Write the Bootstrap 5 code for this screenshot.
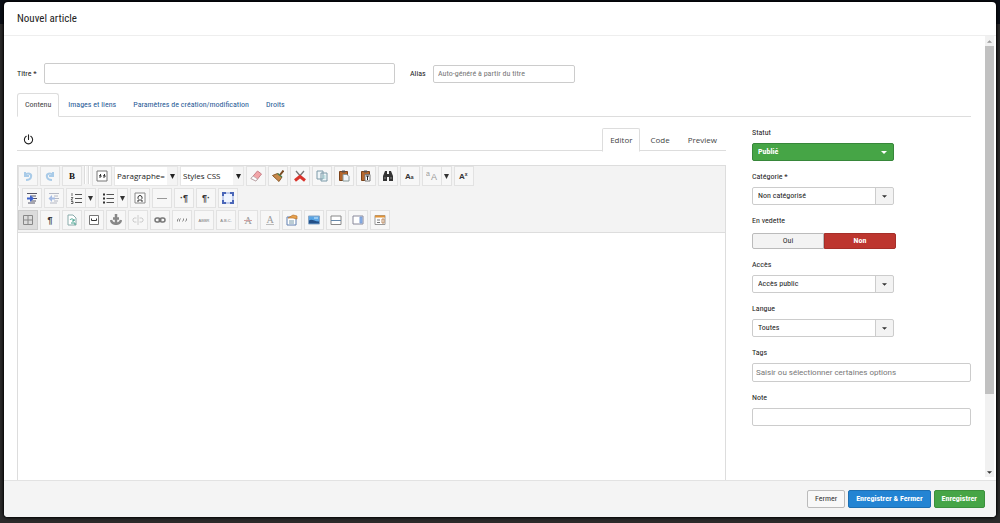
<!DOCTYPE html>
<html lang="fr">
<head>
<meta charset="utf-8">
<meta name="viewport" content="width=device-width, initial-scale=1">
<title>Nouvel article</title>
<link href="https://cdn.jsdelivr.net/npm/bootstrap@5.3.0/dist/css/bootstrap.min.css" rel="stylesheet">
<style>
  body { font: 8px/14px "Roboto Condensed", "Liberation Sans", sans-serif; color: #222; background: linear-gradient(#0a0e16 24px, #2b2a2a 24px); }
  .shell { height: 100vh; padding: 2px 4px 6px; }
  .dialog { background: #fff; border-radius: 4px; box-shadow: 0 0 3px 1px #000; }
  .dialog-head { height: 34px; border-bottom: 1px solid #eee; padding: 0 13px; }
  .dialog-head h1 { font-size: 11px; line-height: 16px; font-weight: 400; }
  .dialog-foot { background: #f4f4f4; border-top: 1px solid #e2e2e2; height: 37px; padding: 0 11px 0 0; gap: 3px; }
  .pane { padding: 27px 14px 0 13px; }
  .field { font: inherit; color: #222; border: 1px solid #ccc; border-radius: 2px; height: 18px; padding: 0 4px; background-color: #fff; }
  .field::placeholder { color: #777; opacity: 1; }
  .field-title { height: 21px; width: 351px; }
  .field-alias { width: 142px; }
  .title-label { width: 27px; }
  .alias-label { width: 23px; margin-left: 15px; }
  .tabs-main, .tabs-edit { border-bottom: 1px solid #ddd; }
  .tabs-main .nav-link { padding: 4px 7px; margin-right: 1px; font-size: 8px; line-height: 14px; border-radius: 3px 3px 0 0; color: #1f5a96; }
  .tabs-main .nav-link.active, .tabs-edit .nav-link.active { color: #444; border-color: #ddd #ddd #fff; }
  .tabs-main { margin-top: 9px; }
  .tabs-edit .nav-link { font: 8px/14px "Open Sans", sans-serif; padding: 4px 7px; margin-right: 2px; color: #444; border-radius: 2px 2px 0 0; }
  .tabs-edit .nav-item:last-child .nav-link { margin-right: 1px; }
  .columns { gap: 26px; padding-top: 8px; }
  .editor-head { margin-top: 3px; border-bottom: 1px solid #ddd; padding-left: 6px; }
  .tabs-edit { border: 0; margin-bottom: -1px; }
  .editor { margin-top: 14px; border: 1px solid #ddd; border-bottom: 0; }
  .tools { background: #f3f3f3; border-bottom: 1px solid #ddd; }
  .tools > div { gap: 2px; height: 22px; }
  .tool { width: 20px; height: 20px; padding: 0; border: 1px solid #e2e2e2; background: #f7f7f7; color: #333; font-family: "Liberation Sans", sans-serif; font-size: 9px; display: flex; align-items: center; justify-content: center; flex: none; }
  .tool svg { width: 12px; height: 12px; fill: none; stroke: currentColor; }
  .tool.pressed { background: #dcdcdc; border-color: #ccc; }
  .tool.faint { color: #b4b4b4; }
  .tool.drop { width: 11px; margin-left: -3px; }
  .tool.drop svg { width: 7px; height: 7px; }
  .rule { width: 2px; height: 18px; border-left: 1px solid #dcdcdc; border-right: 1px solid #fff; }
  .pick { font: 8px/18px "Open Sans", sans-serif; color: #222; width: 64px; height: 20px; border: 1px solid #e6e6e6; padding: 0 0 0 2px; appearance: none; border-radius: 0;
    background: url("data:image/svg+xml,%3Csvg xmlns='http://www.w3.org/2000/svg' viewBox='0 0 5 5'%3E%3Cpath d='M0 0h5L2.500 5z' fill='%23222'/%3E%3C/svg%3E") right 2px center/5px 5px no-repeat, linear-gradient(to left, #f4f4f4 10px, #fff 10px); }
  .sheet { border: 0; resize: none; outline: 0; }
  .side { width: 219px; flex: none; padding-top: 1px; }
  .side label, .side .legend { display: block; margin-bottom: 3px; line-height: 14px; }
  .side .group { margin-bottom: 9px; }
  .chooser { width: 142px; padding-left: 5px; appearance: none; display: block;
    background: url("data:image/svg+xml,%3Csvg xmlns='http://www.w3.org/2000/svg' viewBox='0 0 6 3'%3E%3Cpath d='M0 0h6L3 3z' fill='%23333'/%3E%3C/svg%3E") right 6px center/5px 3px no-repeat, linear-gradient(to left, #f3f3f3 17px, #ccc 17px, #ccc 18px, #fff 18px); }
  .chooser.live { color: #fff; font-weight: 700; border-color: #37873a;
    background: url("data:image/svg+xml,%3Csvg xmlns='http://www.w3.org/2000/svg' viewBox='0 0 6 3'%3E%3Cpath d='M0 0h6L3 3z' fill='%23fff'/%3E%3C/svg%3E") right 6px center/6px 3px no-repeat, #46a546; }
  .wide { width: 100%; display: block; }
  .tags { font-family: Roboto, sans-serif; height: 19px; padding: 0 3px; }
  .switch { height: 18px; padding-top: 2px; width: 144px; }
  .side .switch .btn { font-size: 8px; line-height: 14px; padding: 0; border: 1px solid #bbb; background: #f3f3f3; color: #333; border-radius: 2px; display: block; margin: 0; flex: 1; }
  .side .switch .btn-check:checked + .btn { background: #bd362f; border-color: #a52f29; color: #fff; font-weight: 700; }
  .act { font-size: 8px; line-height: 16px; padding: 0 7px; border-radius: 2px; border: 1px solid #bbb; color: #333; background: #f8f8f8; }
  .act-blue { background: #2384d3; border-color: #1d6fb2; color: #fff; font-weight: 700; }
  .act-green { background: #46a546; border-color: #3c903c; color: #fff; font-weight: 700; }
  .track { width: 9px; background: #f1f1f1; margin-right: 2px; margin-bottom: 3px; padding-top: 1px; }
  .track svg { width: 5px; height: 3px; margin: 3px auto; display: block; }
  .thumb { background: #c1c1c1; height: 79%; }
</style>
</head>
<body>
<svg class="d-none" xmlns="http://www.w3.org/2000/svg">
  <symbol id="i-down" viewBox="0 0 7 7"><path d="M1 1h5L3.500 6z" fill="currentColor" stroke="none"/></symbol>
  <symbol id="i-undo" viewBox="0 0 12 12"><path d="M3 2v4h4M3 5c3-3 7-1 6 2-.5 2-2 3-5 3" stroke="#a9cbe8" stroke-width="2"/></symbol>
  <symbol id="i-quote" viewBox="0 0 12 12"><path d="M1 1h10v10H1z" fill="#fff" stroke="#777"/><path d="M3 7h2V5.500H3.500L5 4M7 7h2V5.500H7.500L9 4" stroke="#333"/></symbol>
  <symbol id="i-eraser" viewBox="0 0 12 12"><path d="M1 8.500 7.500 1l4 3L6 11z" fill="#f2a5a8" stroke="#c98088"/><path d="m1 8.500 2-2.500 4.500 3L6 11z" fill="#fff" stroke="#aaa" stroke-width=".7"/></symbol>
  <symbol id="i-broom" viewBox="0 0 12 12"><path d="M11.500 .5 8 5" stroke="#7a4a22" stroke-width="2"/><path d="m.5 5.500 5-2 4.500 3.500-3 4.500z" fill="#c98a4b" stroke="#8a5a2b"/><path d="m5.500 3.500 4.500 3.500" stroke="#4d7d4d" stroke-width="1.500"/></symbol>
  <symbol id="i-cut" viewBox="0 0 12 12"><path d="m2 1 6 7M10 1 4 8" stroke="#777" stroke-width="1.300"/><path d="m1 10.500 5-4 5 4" stroke="#d9332b" stroke-width="3"/></symbol>
  <symbol id="i-copy" viewBox="0 0 12 12"><path d="M1 1h6v8H1zM5 3h6v8H5z" fill="#eef5f8" stroke="#7d9aa8"/><path d="M6.500 6h3m-3 2h3" stroke="#9cc"/></symbol>
  <symbol id="i-paste" viewBox="0 0 12 12"><path d="M1.500 1.500h8v9h-8z" fill="#b5672c" stroke="#7c4218"/><path d="M4 1h3v1H4z" stroke="#555"/><path d="M5 4.500h4l2 2V11H5z" fill="#f3f7f9" stroke="#899"/></symbol>
  <symbol id="i-pastet" viewBox="0 0 12 12"><path d="M1.500 1.500h8v9h-8z" fill="#b5672c" stroke="#7c4218"/><path d="M4 1h3v1H4z" stroke="#555"/><path d="M5 4.500h5V11H5z" fill="#fff" stroke="#777"/><path d="M6 6h3M7.500 6v4" stroke="#222"/></symbol>
  <symbol id="i-find" viewBox="0 0 12 12"><path d="M3 1h2v3h2V1h2l2 5v5H7V7H5v4H1V6z" fill="#333" stroke="none"/><path d="M2 8h2m4 0h2" stroke="#888"/></symbol>
  <symbol id="i-indent" viewBox="0 0 12 12"><path d="M1 1.500h10M5 4h5M6 6.500h5M5 9h5M2 11h7" stroke="#556"/><path d="M1 6.500h4" stroke="#3d62cc" stroke-width="2"/><path d="M4 3 8 6.500 4 10z" fill="#3d62cc" stroke="none"/></symbol>
  <symbol id="i-outdent" viewBox="0 0 12 12"><path d="M1 1.500h10M6 4h4M6 6.500h5M6 9h4M2 11h7" stroke="#b4b8c4"/><path d="M3 6.500h4" stroke="#a5bbe3" stroke-width="2"/><path d="M4 3 .5 6.500 4 10z" fill="#a5bbe3" stroke="none"/></symbol>
  <symbol id="i-ol" viewBox="0 0 12 12"><path d="M5 2.500h7M5 6.500h7M5 10.500h7" stroke="#555"/><path d="M2 1v3M1 5.500h2L1 8h2M1 9.500h2v2H1" stroke-width=".7"/></symbol>
  <symbol id="i-ul" viewBox="0 0 12 12"><path d="M4.500 2.500H12M4.500 6.500H12M4.500 10.500H12" stroke="#555"/><path d="M1 2.500h2M1 6.500h2M1 10.500h2" stroke-width="2"/></symbol>
  <symbol id="i-box" viewBox="0 0 12 12"><path d="M1 1h10v10H1z" fill="#fff" stroke="#888"/><path d="M3 9h2V7.500Q3.500 6.500 4 5t2-1.500T8 5t-1 2.500V9h2" stroke="#333"/></symbol>
  <symbol id="i-hr" viewBox="0 0 12 12"><path d="M1 6.500h10" stroke="#999"/></symbol>
  <symbol id="i-full" viewBox="0 0 12 12"><path d="M1 1h10v10H1z" fill="#eef4ff" stroke="#8fa3dc"/><path d="M1 4V1h3M8 1h3v3M11 8v3H8M4 11H1V8" stroke="#4a66b8" stroke-width="2"/></symbol>
  <symbol id="i-grid" viewBox="0 0 12 12"><path d="M1.500 1.500h9v9h-9zM6 1.500v9M1.500 6h9" stroke="#888"/></symbol>
  <symbol id="i-page" viewBox="0 0 12 12"><path d="M2 1h5l3 3v7H2z" fill="#fff" stroke="#8aa"/><path d="M4 6c1-2 4-1 4 1M8 5v2H6M5 9h4v2" stroke="#43a08c"/></symbol>
  <symbol id="i-nbsp" viewBox="0 0 12 12"><path d="M1.500 1.500h9v9h-9z" fill="#fff" stroke="#777"/><path d="M3.500 4.500v2h5v-2" stroke="#333"/></symbol>
  <symbol id="i-anchor" viewBox="0 0 12 12"><path d="M6 0v11M3 4.500h6" stroke="#888" stroke-width="2.500"/><path d="M1 6c1 5 9 5 10 0" stroke="#888" stroke-width="2.500"/></symbol>
  <symbol id="i-unlink" viewBox="0 0 12 12"><path d="M4.500 4H2L1 5v2l1 1h2.500m3-4H10l1 1v2l-1 1H7.500M6 1v10" stroke="#ccc"/></symbol>
  <symbol id="i-link" viewBox="0 0 12 12"><rect x="1" y="4" width="5" height="4" rx="2" stroke="#777" stroke-width="1.500"/><rect x="6" y="4" width="5" height="4" rx="2" stroke="#777" stroke-width="1.500"/><path d="M4 6h4" stroke="#777"/></symbol>
  <symbol id="i-props" viewBox="0 0 12 12"><path d="M1 3h9v8H1z" fill="#fff" stroke="#5e7fb0"/><path d="M3 7h5M3 9h5" stroke="#79a"/><path d="m2 4 5-3 4 1v3L7 4z" fill="#e9a24c" stroke="#b9732c" stroke-width=".7"/></symbol>
  <symbol id="i-img" viewBox="0 0 12 12"><path d="M.500 2h11v8H.500z" fill="#5aa6e6" stroke="#8aa6c4"/><path d="M1 6.500c3-2 5 1 10 1v2H1z" fill="#224f87" stroke="none"/><path d="M6 4h4" stroke="#d5efff"/></symbol>
  <symbol id="i-break" viewBox="0 0 12 12"><path d="M1 2h10v8.500H1z" fill="#fff" stroke="#888"/><path d="M1 6.500h10" stroke="#68a"/></symbol>
  <symbol id="i-panel" viewBox="0 0 12 12"><path d="M1 2h10v8H1z" fill="#fff" stroke="#889"/><path d="M8 3h2v6H8z" fill="#8db5ee" stroke="#7a9dd5"/></symbol>
  <symbol id="i-module" viewBox="0 0 12 12"><path d="M1 1.500h10v9H1z" fill="#fff" stroke="#999"/><path d="M1 2.500h10" stroke="#e39436" stroke-width="2"/><path d="M3 6h3M3 8.500h3" stroke="#777"/><path d="M8 5h2v4H8z" stroke="#bd8b60"/></symbol>
  <symbol id="i-b" viewBox="0 0 12 12"><text x="6" y="9" text-anchor="middle" font-family="Liberation Serif" font-weight="700" font-size="9" fill="#111" stroke="none">B</text></symbol>
</svg>

<div class="shell">
  <div class="dialog h-100 d-flex flex-column overflow-hidden">
    <header class="dialog-head d-flex align-items-center flex-shrink-0"><h1 class="m-0">Nouvel article</h1></header>
    <div class="d-flex flex-grow-1 overflow-hidden">
      <main class="pane flex-grow-1 d-flex flex-column overflow-hidden">
        <div class="d-flex align-items-center">
          <label for="titre" class="title-label">Titre *</label><input id="titre" class="field field-title" type="text">
          <label for="alias" class="alias-label">Alias</label><input id="alias" class="field field-alias" type="text" placeholder="Auto-généré à partir du titre">
        </div>
        <ul class="nav nav-tabs tabs-main">
          <li class="nav-item"><a class="nav-link active" href="#contenu">Contenu</a></li>
          <li class="nav-item"><a class="nav-link" href="#images">Images et liens</a></li>
          <li class="nav-item"><a class="nav-link" href="#parametres">Paramètres de création/modification</a></li>
          <li class="nav-item"><a class="nav-link" href="#droits">Droits</a></li>
        </ul>
        <div id="contenu" class="columns d-flex flex-grow-1 overflow-hidden">
          <section class="flex-grow-1 d-flex flex-column overflow-hidden">
            <div class="editor-head d-flex align-items-center justify-content-between">
              <button type="button" class="btn p-0 border-0 d-flex" aria-label="Activer l'éditeur"><svg width="11" height="11" viewBox="0 0 12 12" fill="none" stroke="#222" stroke-width="1.200" stroke-linecap="round"><path d="M3.500 2.500a4.500 4.500 0 1 0 5 0M6 1v5"/></svg></button>
              <ul class="nav nav-tabs tabs-edit">
                <li class="nav-item"><a class="nav-link active" href="#editor">Editor</a></li>
                <li class="nav-item"><a class="nav-link" href="#code">Code</a></li>
                <li class="nav-item"><a class="nav-link" href="#preview">Preview</a></li>
              </ul>
            </div>
            <div id="editor" class="editor flex-grow-1 d-flex flex-column">
              <div class="tools">
                <div class="d-flex align-items-start">
                  <button class="tool" aria-label="Annuler"><svg><use href="#i-undo"/></svg></button>
                  <button class="tool" aria-label="Rétablir"><svg viewBox="0 0 12 12"><path d="M9 2v4H5M9 5C6 2 2 4 3 7c.5 2 2 3 5 3" stroke="#a9cbe8" stroke-width="2"/></svg></button>
                  <button class="tool" aria-label="Gras"><svg><use href="#i-b"/></svg></button>
                  <span class="rule"></span><span class="rule"></span>
                  <button class="tool" aria-label="Citation"><svg><use href="#i-quote"/></svg></button>
                  <select class="pick" aria-label="Format"><option>Paragraphe=</option></select>
                  <select class="pick" aria-label="Styles"><option>Styles CSS</option></select>
                  <button class="tool" aria-label="Effacer"><svg><use href="#i-eraser"/></svg></button>
                  <button class="tool" aria-label="Nettoyer"><svg><use href="#i-broom"/></svg></button>
                  <button class="tool" aria-label="Couper"><svg><use href="#i-cut"/></svg></button>
                  <button class="tool" aria-label="Copier"><svg><use href="#i-copy"/></svg></button>
                  <button class="tool" aria-label="Coller"><svg><use href="#i-paste"/></svg></button>
                  <button class="tool" aria-label="Coller le texte"><svg><use href="#i-pastet"/></svg></button>
                  <button class="tool" aria-label="Rechercher"><svg><use href="#i-find"/></svg></button>
                  <button class="tool" aria-label="Casse"><svg viewBox="0 0 12 12"><text x="1" y="9" font-family="Liberation Sans" font-weight="700" font-size="8" fill="#333" stroke="none">A<tspan font-size="5">a</tspan></text></svg></button>
                  <button class="tool faint" aria-label="Langue"><svg viewBox="0 0 12 12"><text x="0" y="6" font-family="Liberation Sans" font-size="7" fill="#999" stroke="none">a</text><text x="5" y="10" font-family="Liberation Sans" font-size="9" fill="#999" stroke="none">A</text></svg></button>
                  <button class="tool drop" aria-label="Choix de langue"><svg><use href="#i-down"/></svg></button>
                  <button class="tool" aria-label="Exposant"><svg viewBox="0 0 12 12"><text x="1" y="9" font-family="Liberation Sans" font-weight="700" font-size="8" fill="#333" stroke="none">A<tspan font-size="5" dy="-3">x</tspan></text></svg></button>
                </div>
                <div class="d-flex align-items-start">
                  <span class="rule"></span>
                  <button class="tool" aria-label="Augmenter le retrait"><svg><use href="#i-indent"/></svg></button>
                  <button class="tool" aria-label="Réduire le retrait"><svg><use href="#i-outdent"/></svg></button>
                  <button class="tool" aria-label="Liste numérotée"><svg><use href="#i-ol"/></svg></button>
                  <button class="tool drop" aria-label="Types de numéros"><svg><use href="#i-down"/></svg></button>
                  <button class="tool" aria-label="Liste à puces"><svg><use href="#i-ul"/></svg></button>
                  <button class="tool drop" aria-label="Types de puces"><svg><use href="#i-down"/></svg></button>
                  <button class="tool" aria-label="Caractère spécial"><svg><use href="#i-box"/></svg></button>
                  <button class="tool" aria-label="Ligne horizontale"><svg><use href="#i-hr"/></svg></button>
                  <button class="tool" aria-label="Gauche à droite"><b>·¶</b></button>
                  <button class="tool" aria-label="Droite à gauche"><b>¶·</b></button>
                  <button class="tool" aria-label="Plein écran"><svg><use href="#i-full"/></svg></button>
                </div>
                <div class="d-flex align-items-start">
                  <button class="tool pressed" aria-label="Contours"><svg><use href="#i-grid"/></svg></button>
                  <button class="tool" aria-label="Marques"><b>¶</b></button>
                  <button class="tool" aria-label="Lien de page"><svg><use href="#i-page"/></svg></button>
                  <button class="tool" aria-label="Espace insécable"><svg><use href="#i-nbsp"/></svg></button>
                  <button class="tool" aria-label="Ancre"><svg><use href="#i-anchor"/></svg></button>
                  <button class="tool" aria-label="Supprimer le lien"><svg><use href="#i-unlink"/></svg></button>
                  <button class="tool" aria-label="Lien"><svg><use href="#i-link"/></svg></button>
                  <button class="tool faint" aria-label="Guillemets"><svg viewBox="0 0 12 12"><path d="M1.500 7.500V6l1-1.500m1 3V6l1-1.500m3 0V6l-1 1.500M10.500 4.500V6l-1 1.500" stroke="#888"/></svg></button>
                  <button class="tool faint" aria-label="Abréviation"><svg viewBox="0 0 12 12"><text x="6" y="8" text-anchor="middle" font-family="Liberation Sans" font-size="4" fill="#777" stroke="none">ABBR</text></svg></button>
                  <button class="tool faint" aria-label="Acronyme"><svg viewBox="0 0 12 12"><text x="6" y="8" text-anchor="middle" font-family="Liberation Sans" font-size="4" fill="#777" stroke="none">A.B.C.</text></svg></button>
                  <button class="tool faint" aria-label="Supprimé"><svg viewBox="0 0 12 12"><text x="6" y="10" text-anchor="middle" font-family="Liberation Serif" font-size="10" fill="#999" stroke="none">A</text><path d="M2 6.500h8" stroke="#d3a0a0"/></svg></button>
                  <button class="tool faint" aria-label="Inséré"><svg viewBox="0 0 12 12"><text x="6" y="9" text-anchor="middle" font-family="Liberation Serif" font-size="10" fill="#999" stroke="none">A</text><path d="M2 10.500h8" stroke="#bbb"/></svg></button>
                  <button class="tool" aria-label="Attributs"><svg><use href="#i-props"/></svg></button>
                  <button class="tool" aria-label="Image"><svg><use href="#i-img"/></svg></button>
                  <button class="tool" aria-label="Saut de page"><svg><use href="#i-break"/></svg></button>
                  <button class="tool" aria-label="Lire la suite"><svg><use href="#i-panel"/></svg></button>
                  <button class="tool" aria-label="Module"><svg><use href="#i-module"/></svg></button>
                </div>
              </div>
              <textarea class="sheet flex-grow-1 w-100" aria-label="Contenu"></textarea>
            </div>
          </section>
          <aside class="side">
            <div class="group"><label for="statut">Statut</label><select id="statut" class="field chooser live"><option>Publié</option></select></div>
            <div class="group"><label for="categorie">Catégorie *</label><select id="categorie" class="field chooser"><option>Non catégorisé</option></select></div>
            <div class="group" role="radiogroup" aria-labelledby="vedette"><span id="vedette" class="legend">En vedette</span>
              <div class="switch d-flex"><input class="btn-check" type="radio" name="v" id="oui"><label class="btn rounded-end-0" for="oui">Oui</label><input class="btn-check" type="radio" name="v" id="non" checked><label class="btn rounded-start-0" for="non">Non</label></div></div>
            <div class="group"><label for="acces">Accès</label><select id="acces" class="field chooser"><option>Accès public</option></select></div>
            <div class="group"><label for="langue">Langue</label><select id="langue" class="field chooser"><option>Toutes</option></select></div>
            <div class="group"><label for="tags">Tags</label><input id="tags" class="field wide tags" type="text" placeholder="Saisir ou sélectionner certaines options"></div>
            <div class="group"><label for="note">Note</label><input id="note" class="field wide" type="text"></div>
          </aside>
        </div>
      </main>
      <div class="track d-flex flex-column flex-shrink-0" aria-hidden="true">
        <svg viewBox="0 0 6 3"><path d="M0 3h6L3 0z" fill="#999"/></svg>
        <div class="thumb"></div>
        <svg class="mt-auto" viewBox="0 0 6 3"><path d="M0 0h6L3 3z" fill="#333"/></svg>
      </div>
    </div>
    <footer class="dialog-foot d-flex align-items-center justify-content-end flex-shrink-0">
      <button type="button" class="btn act">Fermer</button>
      <button type="button" class="btn act act-blue">Enregistrer &amp; Fermer</button>
      <button type="button" class="btn act act-green">Enregistrer</button>
    </footer>
  </div>
</div>
<script src="https://cdn.jsdelivr.net/npm/bootstrap@5.3.0/dist/js/bootstrap.bundle.min.js"></script>
</body>
</html>
